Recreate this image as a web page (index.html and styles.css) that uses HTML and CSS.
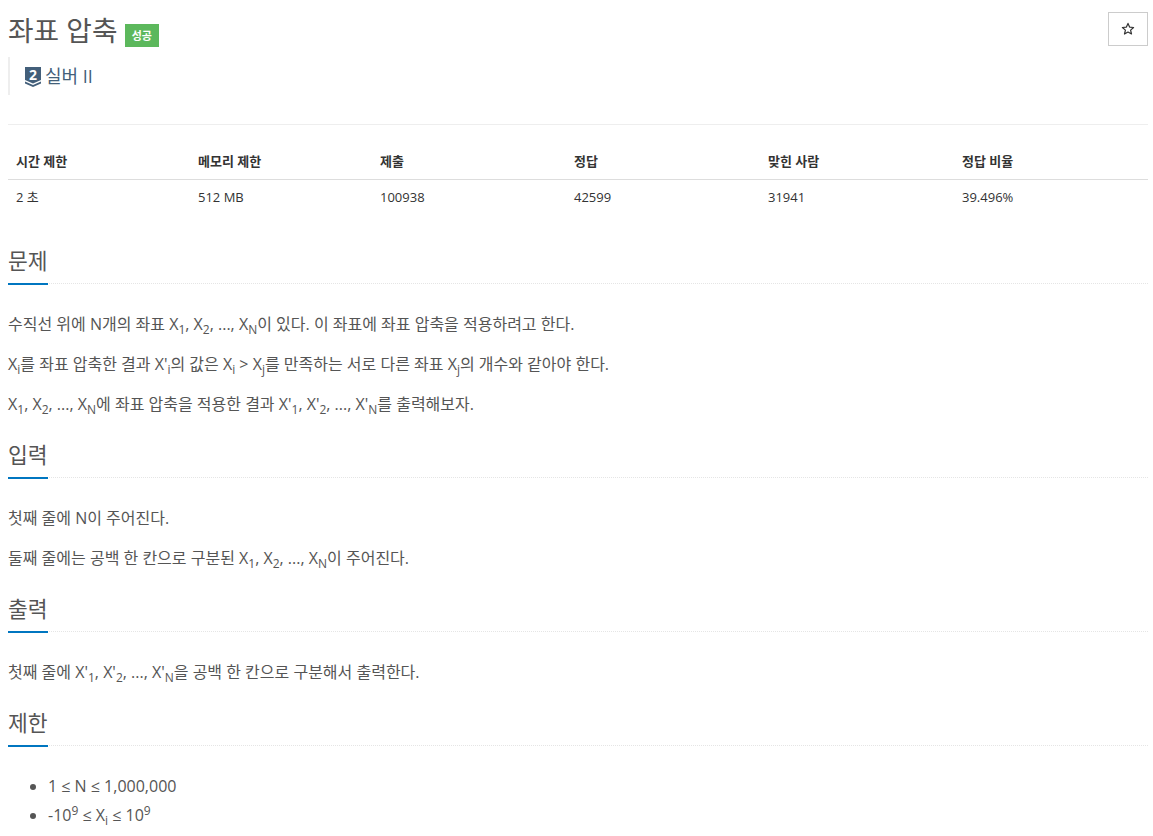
FILE: index.html
```html
<!DOCTYPE html>
<html lang="ko">
<head>
  <meta charset="UTF-8">
  <title>좌표 압축</title>
  <link rel="stylesheet" href="styles.css">
</head>
<body>
  <div class="page">
    <div class="title-row">
      <h1 class="title">좌표 압축 <span class="badge">성공</span></h1>
      <button class="star-btn" type="button">
        <svg width="14" height="14" viewBox="0 0 14 14"><path d="M7 1.4l1.6 3.7 4 .4-3 2.6.9 3.9L7 10l-3.5 2 .9-3.9-3-2.6 4-.4z" fill="none" stroke="#333" stroke-width="1.2" stroke-linejoin="round"/></svg>
      </button>
    </div>
    <blockquote class="tier">
      <svg class="tier-icon" width="16" height="20" viewBox="0 0 16 20">
        <path d="M0 0h16v13l-8 3.500L0 13z" fill="#435f7a"/>
        <path d="M0 14.500L8 18l8-3.500v2L8 20 0 16.500z" fill="#435f7a"/>
        <text x="8" y="13" text-anchor="middle" class="tier-num">2</text>
      </svg>
      <span class="tier-name">실버 II</span>
    </blockquote>
    <hr class="rule">

    <table class="info">
      <thead>
        <tr>
          <th class="c1">시간 제한</th>
          <th class="c2">메모리 제한</th>
          <th class="c3">제출</th>
          <th class="c4">정답</th>
          <th class="c4">맞힌 사람</th>
          <th>정답 비율</th>
        </tr>
      </thead>
      <tbody>
        <tr>
          <td>2 초</td>
          <td>512 MB</td>
          <td>100938</td>
          <td>42599</td>
          <td>31941</td>
          <td>39.496%</td>
        </tr>
      </tbody>
    </table>

    <section class="sec first">
      <h3 class="sec-title"><span>문제</span></h3>
      <p>수직선 위에 N개의 좌표 X<sub>1</sub>, X<sub>2</sub>, ..., X<sub>N</sub>이 있다. 이 좌표에 좌표 압축을 적용하려고 한다.</p>
      <p>X<sub>i</sub>를 좌표 압축한 결과 X'<sub>i</sub>의 값은 X<sub>i</sub> &gt; X<sub>j</sub>를 만족하는 서로 다른 좌표 X<sub>j</sub>의 개수와 같아야 한다.</p>
      <p>X<sub>1</sub>, X<sub>2</sub>, ..., X<sub>N</sub>에 좌표 압축을 적용한 결과 X'<sub>1</sub>, X'<sub>2</sub>, ..., X'<sub>N</sub>를 출력해보자.</p>
    </section>

    <section class="sec">
      <h3 class="sec-title"><span>입력</span></h3>
      <p>첫째 줄에 N이 주어진다.</p>
      <p>둘째 줄에는 공백 한 칸으로 구분된 X<sub>1</sub>, X<sub>2</sub>, ..., X<sub>N</sub>이 주어진다.</p>
    </section>

    <section class="sec">
      <h3 class="sec-title"><span>출력</span></h3>
      <p>첫째 줄에 X'<sub>1</sub>, X'<sub>2</sub>, ..., X'<sub>N</sub>을 공백 한 칸으로 구분해서 출력한다.</p>
    </section>

    <section class="sec">
      <h3 class="sec-title"><span>제한</span></h3>
      <ul class="limits">
        <li>1 ≤ N ≤ 1,000,000</li>
        <li>-10<sup>9</sup> ≤ X<sub>i</sub> ≤ 10<sup>9</sup></li>
      </ul>
    </section>
  </div>
</body>
</html>
```

FILE: styles.css
```css
html, body {
  margin: 0;
  height: 836px;
  overflow: hidden;
}

body {
  font-family: "Open Sans", "Noto Sans CJK KR", sans-serif;
  font-size: 16px;
  line-height: 20px;
  color: #555;
  background: #fff;
}

.page {
  padding: 0 5px 0 8px;
}

.title-row {
  display: flex;
  justify-content: space-between;
  align-items: flex-start;
  padding-top: 12px;
}

.title {
  margin: 0;
  font-size: 27.800px;
  line-height: 36px;
  font-weight: 400;
  color: #555;
}

.badge {
  display: inline-block;
  vertical-align: 1px;
  padding: 0 7px;
  font-size: 11px;
  line-height: 23px;
  font-weight: 700;
  color: #fff;
  background: #5cb85c;
}

.star-btn {
  display: flex;
  align-items: center;
  justify-content: center;
  width: 40px;
  height: 34px;
  padding: 0;
  background: #fff;
  border: 1px solid #ccc;
}

.tier {
  display: flex;
  align-items: center;
  gap: 4px;
  height: 38px;
  margin: 9px 0 0;
  padding-left: 15px;
  border-left: 2px solid #eee;
}

.tier-icon {
  flex: none;
  overflow: visible;
  margin-top: 2px;
}

.tier-num {
  font-family: "Open Sans", sans-serif;
  font-size: 14px;
  font-weight: 700;
  fill: #fff;
}

.tier-name {
  font-size: 18px;
  color: #435f7a;
}

.rule {
  margin: 29px 0 0;
  border: 0;
  border-top: 1px solid #eee;
}

.info {
  width: 100%;
  margin-top: 18px;
  border-collapse: collapse;
  font-size: 13px;
  text-align: left;
}

.info th {
  padding: 8px;
  height: 20px;
  color: #333;
  font-weight: 700;
  border-bottom: 1px solid #ddd;
}

.info td {
  padding: 7px 8px 8px;
  height: 20px;
  color: #333;
}

.c1, .c2 {
  width: 182px;
  box-sizing: border-box;
}

.c3, .c4 {
  width: 194px;
  box-sizing: border-box;
}

.sec {
  margin-top: 26px;
}

.sec.first {
  margin-top: 31px;
}

.sec-title {
  margin: 0 0 30px;
  font-size: 21.500px;
  line-height: 30px;
  font-weight: 400;
  color: #555;
  border-bottom: 1px dotted #e5e5e5;
}

.sec-title span {
  display: inline-block;
  padding-bottom: 7px;
  margin-bottom: -2px;
  border-bottom: 2px solid #0076c0;
  vertical-align: top;
}

.sec p {
  margin: 0 0 20px;
}

sub, sup {
  font-size: 12px;
  line-height: 0;
}

.limits {
  margin: -4px 0 0;
  padding-left: 40px;
  line-height: 28px;
}

.limits li + li {
  margin-top: 1px;
}
```
